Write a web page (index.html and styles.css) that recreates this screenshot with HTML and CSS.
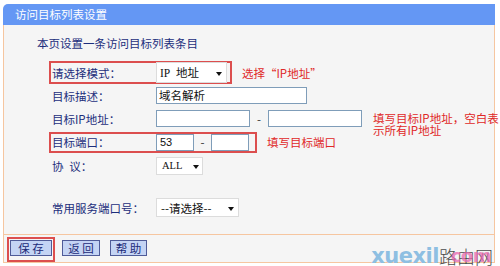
FILE: index.html
```html
<!DOCTYPE html>
<html>
<head>
<meta charset="utf-8">
<link rel="stylesheet" href="styles.css">
</head>
<body>
<div class="page">
  <div class="header">访问目标列表设置</div>
  <div class="panel">
    <div class="intro">本页设置一条访问目标列表条目</div>
    <div class="row">
      <div class="box box-mode">
        <span class="label">请选择模式：</span>
        <div class="select sel-mode"><span>IP&nbsp;&nbsp;地址</span><i class="arrow"></i></div>
      </div>
      <span class="note note-mode">选择“IP地址”</span>
    </div>
    <div class="row">
      <div class="box plain">
        <span class="label">目标描述：</span>
        <div class="input in-desc">域名解析</div>
      </div>
    </div>
    <div class="row">
      <div class="box plain">
        <span class="label">目标IP地址：</span>
        <div class="input in-ip"></div>
        <span class="dash dash-ip">-</span>
        <div class="input in-ip"></div>
      </div>
      <span class="note note-ip">填写目标IP地址，空白表<br>示所有IP地址</span>
    </div>
    <div class="row row-port">
      <div class="box box-port">
        <span class="label">目标端口：</span>
        <div class="input in-port">53</div>
        <span class="dash dash-port">-</span>
        <div class="input in-port"></div>
      </div>
      <span class="note note-port">填写目标端口</span>
    </div>
    <div class="row">
      <div class="box plain">
        <span class="label">协&ensp;议：</span>
        <div class="select sel-proto"><span>ALL</span><i class="arrow"></i></div>
      </div>
    </div>
    <div class="spacer"></div>
    <div class="row">
      <div class="box plain">
        <span class="label">常用服务端口号：</span>
        <div class="select sel-svc"><span>--请选择--</span><i class="arrow"></i></div>
      </div>
    </div>
  </div>
  <div class="buttons">
    <div class="btn-wrap active"><span class="btn btn-save">保&nbsp;存</span></div>
    <div class="btn-wrap"><span class="btn btn-back">返&nbsp;回</span></div>
    <div class="btn-wrap"><span class="btn btn-help">帮&nbsp;助</span></div>
  </div>
  <div class="watermark"><span class="wm-a">xuexil</span><span class="wm-b">路由网</span><span class="wm-c">com</span></div>
</div>
</body>
</html>
```

FILE: styles.css
```css
body {
  margin: 0;
  background: #ffffff;
  font-family: "Noto Sans CJK SC", "Noto Sans", sans-serif;
  font-size: 11.5px;
  color: #1c2e7c;
}

.page {
  position: relative;
  margin: 4px 0 0 3px;
  width: 492px;
  height: 262px;
}

.header {
  height: 21px;
  line-height: 21px;
  padding-left: 12px;
  background: #6497f4;
  color: #ffffff;
  border-top-left-radius: 5px;
  font-size: 11.5px;
}

.panel {
  background: #f5f5f5;
  border: 1px solid #f6c6a0;
  border-top: none;
  padding: 10px 0 15px 0;
}

.intro {
  height: 16px;
  line-height: 16px;
  padding-left: 33px;
  margin-bottom: 10px;
}

.row {
  display: flex;
  align-items: center;
  height: 23px;
  padding-left: 45px;
}

.row-port {
  height: 24px;
}

.spacer {
  height: 19px;
}

.box {
  display: flex;
  align-items: center;
  border: 2px solid transparent;
  box-sizing: border-box;
}

.box-mode {
  height: 23px;
  width: 183px;
  border-color: #dc4e4e;
}

.box-port {
  height: 21px;
  width: 208px;
  border-color: #dc4e4e;
}

.label {
  width: 104px;
  padding-left: 1px;
  white-space: nowrap;
  line-height: 14px;
}

.input {
  box-sizing: border-box;
  background: #ffffff;
  border: 1px solid #7f9db9;
  height: 17px;
  line-height: 15px;
  padding-left: 2px;
  color: #111111;
  font-size: 11.5px;
}

.in-desc {
  width: 151px;
}

.in-ip {
  width: 94px;
}

.in-port {
  width: 38px;
  padding-left: 3px;
  font-family: "Liberation Sans", sans-serif;
  font-size: 11px;
}

.dash {
  color: #333333;
  text-align: center;
  line-height: 14px;
}

.dash-ip {
  width: 18px;
}

.dash-port {
  width: 17px;
}

.select {
  position: relative;
  box-sizing: border-box;
  background: #ffffff;
  border: 1px solid #dcdcdc;
  color: #111111;
  line-height: 14px;
  display: flex;
  align-items: center;
}

.sel-mode {
  width: 71px;
  height: 21px;
  padding-left: 3px;
  font-size: 11.5px;
}

.sel-mode span {
  font-family: "Liberation Serif", "Noto Sans CJK SC", serif;
}

.sel-proto {
  width: 47px;
  height: 18px;
  padding-left: 5px;
  font-family: "Liberation Serif", serif;
  font-size: 10.5px;
}

.sel-svc {
  width: 83px;
  height: 19px;
  padding-left: 4px;
}

.arrow {
  position: absolute;
  top: 50%;
  margin-top: -1px;
  width: 0;
  height: 0;
  border-left: 3.5px solid transparent;
  border-right: 3.5px solid transparent;
  border-top: 4px solid #111111;
}

.sel-mode .arrow {
  right: 4px;
}

.sel-proto .arrow {
  right: 3px;
}

.sel-svc .arrow {
  right: 4px;
}

.note {
  color: #e02828;
  white-space: nowrap;
  line-height: 14px;
}

.note-mode {
  margin-left: 10px;
}

.note-port {
  margin-left: 10px;
}

.note-ip {
  align-self: flex-start;
  margin-top: 5px;
  margin-left: 9px;
  line-height: 12px;
}

.buttons {
  display: flex;
  align-items: flex-start;
  gap: 4px;
  height: 28px;
  padding: 2px 0 0 3px;
  box-sizing: border-box;
  background: #f5f5f5;
  border: 1px solid #f6c6a0;
  border-top: none;
}

.btn-wrap {
  border: 2px solid transparent;
  padding: 1px 1px 4px 1px;
}

.btn-wrap.active {
  border-color: #dc4e4e;
}

.btn {
  display: block;
  box-sizing: border-box;
  height: 16px;
  line-height: 14px;
  text-align: center;
  background: #c4d4f4;
  border: 1px solid #4f5b98;
  color: #1c2a78;
  font-size: 11.5px;
}

.btn-save {
  width: 42px;
}

.btn-back {
  width: 38px;
}

.btn-help {
  width: 37px;
}

.watermark {
  position: absolute;
  right: 2px;
  bottom: -1px;
  height: 24px;
  display: flex;
  align-items: flex-end;
  line-height: 22px;
}

.wm-a {
  font-family: "DejaVu Sans", sans-serif;
  font-weight: bold;
  font-size: 21px;
  color: #8ebfe2;
  letter-spacing: -0.5px;
}

.wm-b {
  font-size: 18px;
  color: #4a4a4a;
  font-weight: 300;
}

.wm-c {
  position: absolute;
  right: 2px;
  bottom: 0;
  font-family: "DejaVu Sans", sans-serif;
  font-weight: bold;
  font-size: 18px;
  color: rgba(232, 104, 176, 0.75);
  letter-spacing: -0.5px;
}
```
